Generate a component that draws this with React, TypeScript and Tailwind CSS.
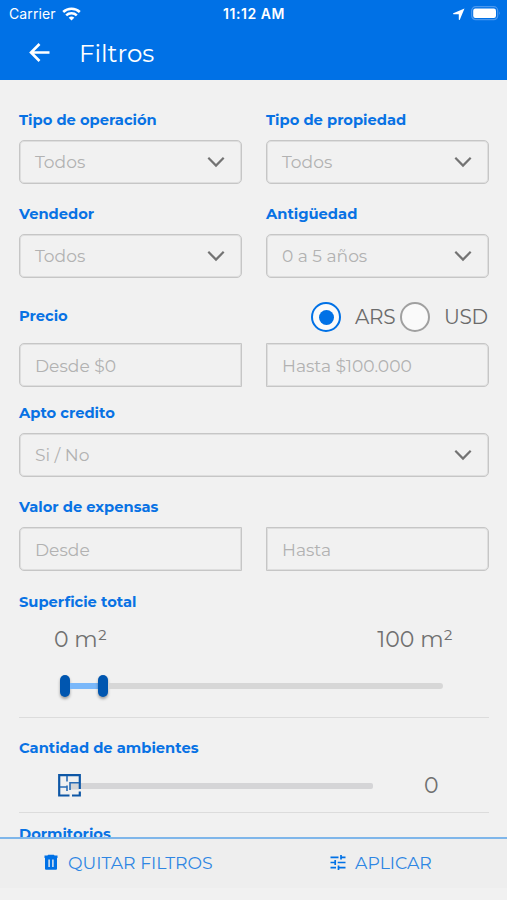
import type React from "react"

import { useState } from "react"
import { clsx } from "clsx"

type Currency = "ARS" | "USD"

const App = () => {
  const [currency, setCurrency] = useState<Currency>("ARS")

  return (
    <div className="flex h-[900px] w-[507px] flex-col overflow-hidden bg-[#f1f1f1] font-['Montserrat','Inter',sans-serif]">
      <header className="h-20 shrink-0 bg-[#0071e6] text-white">
        <StatusBar />
        <div className="flex h-[52px] items-center pl-[29px]">
          <button type="button" aria-label="Volver">
            <BackIcon />
          </button>
          <h1 className="ml-[29px] pt-px text-[24.500px] font-normal leading-none">Filtros</h1>
        </div>
      </header>

      <main className="min-h-0 flex-1 overflow-hidden pl-[19px] pr-[18px] pt-[30px]">
        <div className="grid grid-cols-2 gap-x-6 gap-y-5">
          <Field label="Tipo de operación">
            <Select value="Todos" />
          </Field>
          <Field label="Tipo de propiedad">
            <Select value="Todos" />
          </Field>
          <Field label="Vendedor">
            <Select value="Todos" />
          </Field>
          <Field label="Antigüedad">
            <Select value="0 a 5 años" />
          </Field>
        </div>

        <div className="mt-6 flex h-[30px] items-center justify-between">
          <Label className="mb-[2px]">Precio</Label>
          <div className="flex items-center text-[#6b6b6b]">
            <Radio checked={currency === "ARS"} onClick={() => setCurrency("ARS")} />
            <span className="ml-[14px] w-[45px] text-[20px] font-normal leading-none tracking-[-0.3px]">ARS</span>
            <Radio checked={currency === "USD"} onClick={() => setCurrency("USD")} />
            <span className="ml-[14px] w-[45px] text-[20px] font-normal leading-none tracking-[-0.3px]">USD</span>
          </div>
        </div>
        <div className="mt-[11px] grid grid-cols-2 gap-x-6">
          <TextBox placeholder="Desde $0" className="rounded-l-[5px]" />
          <TextBox placeholder="Hasta $100.000" className="rounded-r-[5px]" />
        </div>

        <div className="mt-4">
          <Field label="Apto credito">
            <Select value="Si / No" />
          </Field>
        </div>

        <div className="mt-5">
          <Label>Valor de expensas</Label>
          <div className="mt-[10px] grid grid-cols-2 gap-x-6">
            <TextBox placeholder="Desde" className="rounded-l-[5px]" />
            <TextBox placeholder="Hasta" className="rounded-r-[5px]" />
          </div>
        </div>

        <div className="mt-[21px] h-[126px] border-b border-[#dcdcdc]">
          <Label>Superficie total</Label>
          <div className="mt-4 flex justify-between pl-[35px] pr-9 text-[22px] font-normal leading-6 text-[#707070]">
            <span>0 m²</span>
            <span>100 m²</span>
          </div>
          <RangeSlider />
        </div>

        <div className="mt-5 h-[75px] border-b border-[#dcdcdc]">
          <Label>Cantidad de ambientes</Label>
          <div className="mt-4 flex h-6 items-center pl-[39px]">
            <RoomsIcon />
            <div className="h-[6px] w-[292px] rounded-r-[2px] bg-[#d5d5d7]" />
            <span className="ml-[51px] text-[22px] font-normal leading-none text-[#707070]">0</span>
          </div>
        </div>

        <div className="mt-[11px]">
          <Label>Dormitorios</Label>
        </div>
      </main>

      <footer className="mb-[12px] flex h-[51px] shrink-0 items-center border-t-2 border-[#7fb6ea] bg-[#eeeeee] text-[17.300px] font-normal leading-none text-[#2e86e3]">
        <button type="button" className="ml-[42px] flex w-[287px] items-center">
          <TrashIcon />
          <span className="mb-[2px] ml-[8px]">QUITAR FILTROS</span>
        </button>
        <button type="button" className="flex items-center">
          <TuneIcon />
          <span className="mb-[2px] ml-[8px]">APLICAR</span>
        </button>
      </footer>
    </div>
  )
}

const StatusBar = () => (
  <div className="grid h-[27px] grid-cols-3 items-center pl-[9px] pr-[6px] font-['Inter',sans-serif] text-[14px] leading-none">
    <div className="flex items-center gap-[6px]">
      <span className="tracking-[0.1px]">Carrier</span>
      <svg width="19" height="14" viewBox="0 0 19 14" fill="none" stroke="currentColor" strokeWidth="2.500">
        <path d="M1.200 5C5.600 .7 13.400 .7 17.800 5" />
        <path d="M4.200 8.300C7 5.500 12 5.500 14.800 8.300" />
        <path d="M6.700 10.800C8.400 9.200 10.600 9.200 12.300 10.800L9.500 13.500Z" fill="currentColor" stroke="none" />
      </svg>
    </div>
    <div className="pr-[2px] text-center text-[14px] font-semibold tracking-[0.55px]">11:12 AM</div>
    <div className="flex items-center justify-end gap-[6px]">
      <svg width="12" height="12" viewBox="0 0 12 12" fill="currentColor">
        <path d="M11.500 .5L.3 5.200C-.1 5.500 0 6.200 .5 6.200H5.800V11.500C5.800 12 6.500 12.100 6.800 11.700Z" />
      </svg>
      <svg width="30" height="15" viewBox="0 0 30 15">
        <rect x=".7" y=".7" width="26" height="13" rx="4" fill="none" stroke="#4a98ee" strokeWidth="1.200" />
        <rect x="2.200" y="2.500" width="22.800" height="9.400" rx="2.200" fill="#fff" />
        <path d="M28 5.200Q29.800 7.200 28 9.200Z" fill="#4a98ee" />
      </svg>
    </div>
  </div>
)

interface LabelProps {
  className?: string
  children: React.ReactNode
}

const Label = ({ className, children }: LabelProps) => (
  <div className={clsx("h-5 whitespace-nowrap text-[14.700px] font-bold leading-5 text-[#0872e4]", className)}>{children}</div>
)

interface FieldProps {
  label: string
  children: React.ReactNode
}

const Field = ({ label, children }: FieldProps) => (
  <div>
    <Label>{label}</Label>
    <div className="mt-[10px]">{children}</div>
  </div>
)

const Select = ({ value }: { value: string }) => (
  <button
    type="button"
    className="flex h-11 w-full items-center justify-between rounded-[5px] border border-[#c6c6c6] pl-[15px] pr-4 text-[17.100px] font-normal text-[#b2b2b2] shadow-[inset_0_0_0_1px_#dedede]"
  >
    <span>{value}</span>
    <svg width="18" height="12" viewBox="0 0 18 12" fill="none" stroke="#737373" strokeWidth="2.200">
      <path d="M1.300 1.800L9 9.600L16.700 1.800" />
    </svg>
  </button>
)

const TextBox = ({ placeholder, className }: { placeholder: string; className?: string }) => (
  <input
    type="text"
    placeholder={placeholder}
    className={clsx(
      "h-11 w-full border border-[#c6c6c6] bg-transparent px-[15px] text-[17.100px] font-normal shadow-[inset_0_0_0_1px_#dedede] outline-none placeholder:text-[#b2b2b2]",
      className,
    )}
  />
)

const Radio = ({ checked, onClick }: { checked: boolean; onClick: () => void }) => (
  <button
    type="button"
    role="radio"
    aria-checked={checked}
    onClick={onClick}
    className={clsx(
      "flex size-[30px] items-center justify-center rounded-full border-2 bg-[#fafafa]",
      checked ? "border-[#0071e6]" : "border-[#a0a0a0]",
    )}
  >
    {checked && <span className="size-[15px] rounded-full bg-[#0071e6]" />}
  </button>
)

const Thumb = () => <div className="h-[22px] w-[10px] rounded-full bg-[#0056b0] shadow-[0_2px_3px_rgba(0,0,0,0.35)]" />

const RangeSlider = () => (
  <div className="mt-[22px] flex h-6 items-center pl-[41px] pr-[46px]">
    <Thumb />
    <div className="h-[6px] w-7 bg-[#7ab8fa]" />
    <Thumb />
    <div className="h-[6px] flex-1 rounded-r-[3px] bg-[#d7d7d7]" />
  </div>
)

const BackIcon = () => (
  <svg width="21" height="20" viewBox="0 0 21 20" fill="none" stroke="currentColor" strokeWidth="2.600">
    <path d="M10.500 1L2 9.500L10.500 18M2.200 9.500H20.500" />
  </svg>
)

// floor plan used as the slider handle
const RoomsIcon = () => (
  <svg className="mb-[2px]" width="23" height="23" viewBox="0 0 23 23" fill="none" stroke="#0e57a6">
    <path d="M12 9H21V15.500H12Z" fill="#d5d5d7" stroke="none" />
    <path d="M11.500 21.500H1.200V1.200H21.800V15M14 21.500H21.800V17.500" strokeWidth="2.200" />
    <path d="M9 2V7.500M9 11.500V17M2 13H9M12 16V8.800H21" strokeWidth="1.600" stroke="#2a6cb5" />
  </svg>
)

const TrashIcon = () => (
  <svg className="mb-px" width="18" height="18" viewBox="0 0 18 18" fill="#0071e6" fillRule="evenodd">
    <path d="M6.200 .7H11.800L12.600 1.600H15.500V3.900H2.500V1.600H5.400ZM3 3.900H15V14.700Q15 15.700 14 15.700H4Q3 15.700 3 14.700ZM6.400 5.500V13H7.800V5.500ZM10.200 5.500V13H11.600V5.500Z" />
  </svg>
)

const TuneIcon = () => (
  <svg className="mb-px" width="18" height="18" viewBox="0 0 18 18" fill="none" stroke="#0071e6" strokeWidth="1.700">
    <path d="M1.500 3.300H9.500M12 3.300H16.500M12 1V5.500M1.500 8.500H6.200M6.200 6V11M8.700 8.500H16.500M1.500 13.700H7M9.500 13.700H16.500M9.500 11.500V16" />
  </svg>
)

export default App
